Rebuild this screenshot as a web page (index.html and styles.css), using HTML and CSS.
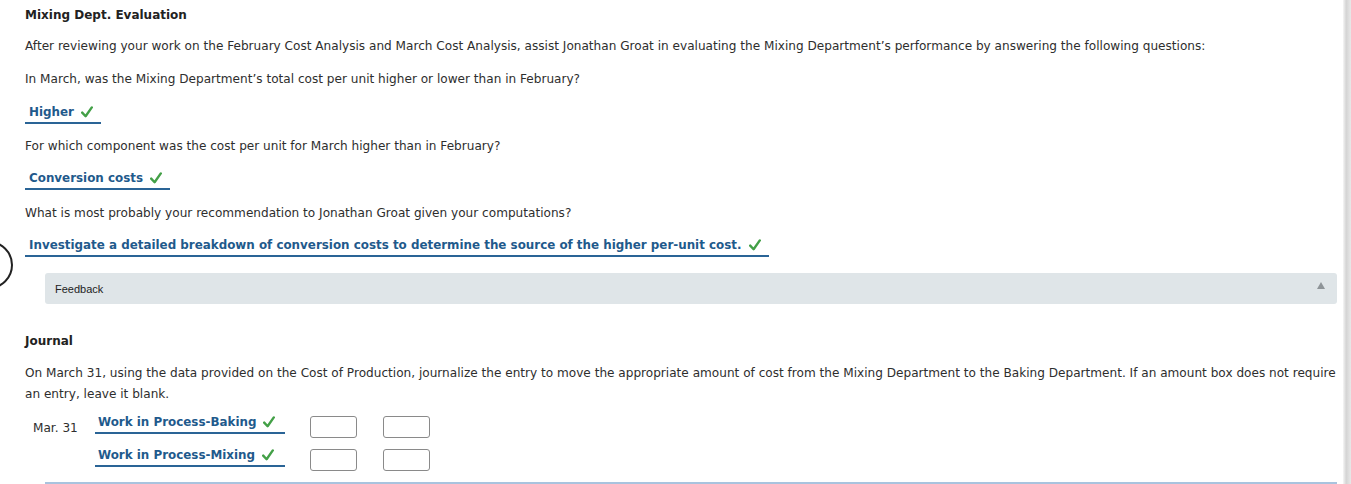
FILE: index.html
```html
<!DOCTYPE html>
<html>
<head>
<meta charset="utf-8">
<link rel="stylesheet" href="styles.css">
</head>
<body>
<div class="page">
  <main class="content">
    <h2 class="title">Mixing Dept. Evaluation</h2>
    <p class="para intro">After reviewing your work on the February Cost Analysis and March Cost Analysis, assist Jonathan Groat in evaluating the Mixing Department’s performance by answering the following questions:</p>
    <p class="para q q1">In March, was the Mixing Department’s total cost per unit higher or lower than in February?</p>
    <div class="answer a1"><span class="ans-text">Higher</span><svg class="check" viewBox="0 0 12 12" width="12" height="12"><path d="M1.2 6.6 L4.6 10.2 L10.8 1.4" fill="none" stroke="#43a047" stroke-width="2.4" stroke-linecap="round" stroke-linejoin="round"/></svg></div>
    <p class="para q q2">For which component was the cost per unit for March higher than in February?</p>
    <div class="answer a2"><span class="ans-text">Conversion costs</span><svg class="check" viewBox="0 0 12 12" width="12" height="12"><path d="M1.2 6.6 L4.6 10.2 L10.8 1.4" fill="none" stroke="#43a047" stroke-width="2.4" stroke-linecap="round" stroke-linejoin="round"/></svg></div>
    <p class="para q q3">What is most probably your recommendation to Jonathan Groat given your computations?</p>
    <div class="answer a3"><span class="ans-text">Investigate a detailed breakdown of conversion costs to determine the source of the higher per-unit cost.</span><svg class="check" viewBox="0 0 12 12" width="12" height="12"><path d="M1.2 6.6 L4.6 10.2 L10.8 1.4" fill="none" stroke="#43a047" stroke-width="2.4" stroke-linecap="round" stroke-linejoin="round"/></svg>
      <span class="ring"></span>
    </div>
    <div class="feedback">
      <span>Feedback</span>
      <span class="tri"></span>
    </div>
    <h2 class="title journal">Journal</h2>
    <p class="para jdesc">On March 31, using the data provided on the Cost of Production, journalize the entry to move the appropriate amount of cost from the Mixing Department to the Baking Department. If an amount box does not require an entry, leave it blank.</p>
    <div class="jtable">
      <div class="jrow">
        <span class="date">Mar. 31</span>
        <div class="acct-cell"><div class="answer acct"><span class="ans-text">Work in Process-Baking</span><svg class="check" viewBox="0 0 12 12" width="12" height="12"><path d="M1.2 6.6 L4.6 10.2 L10.8 1.4" fill="none" stroke="#43a047" stroke-width="2.4" stroke-linecap="round" stroke-linejoin="round"/></svg></div></div>
        <span class="box"></span>
        <span class="box"></span>
      </div>
      <div class="jrow">
        <span class="date"></span>
        <div class="acct-cell"><div class="answer acct"><span class="ans-text">Work in Process-Mixing</span><svg class="check" viewBox="0 0 12 12" width="12" height="12"><path d="M1.2 6.6 L4.6 10.2 L10.8 1.4" fill="none" stroke="#43a047" stroke-width="2.4" stroke-linecap="round" stroke-linejoin="round"/></svg></div></div>
        <span class="box"></span>
        <span class="box"></span>
      </div>
    </div>
    <div class="bottom-line"></div>
  </main>
  <div class="scrollbar"></div>
</div>
</body>
</html>
```

FILE: styles.css
```css
html, body {
  margin: 0;
  padding: 0;
  background: #ffffff;
}
body {
  font-family: "DejaVu Sans", Verdana, sans-serif;
  font-size: 12.1px;
  color: #2e2e2e;
  overflow: hidden;
}
.page {
  display: flex;
  width: 1351px;
  height: 484px;
  overflow: hidden;
}
.content {
  flex: 1;
  padding: 6px 6px 0 25px;
  position: relative;
}
.scrollbar {
  width: 8px;
  background: linear-gradient(to right, #f6f6f6, #d4d4d4 40%, #e8e8e8);
}
.title {
  margin: 0;
  font-size: 12px;
  font-weight: bold;
  color: #222;
  line-height: 18px;
}
.para {
  margin: 0;
  line-height: 21px;
}
.intro { margin-top: 12px; }
.q1 { margin-top: 12px; }
.q2 { margin-top: 12px; }
.q3 { margin-top: 13px; }
.answer {
  display: inline-flex;
  align-items: center;
  gap: 7px;
  padding: 0 8px 2px 4px;
  border-bottom: 2px solid #2a6496;
  line-height: 16px;
  position: relative;
  white-space: nowrap;
}
.ans-text {
  font-weight: bold;
  font-size: 11.9px;
  color: #1f5a8c;
}
.check {
  display: block;
  flex: none;
}
.a1 { margin-top: 14px; }
.a2 { margin-top: 13px; }
.a3 { margin-top: 13px; }
.ring {
  position: absolute;
  left: -60px;
  top: 4px;
  width: 48px;
  height: 48px;
  box-sizing: border-box;
  border: 2px solid #222;
  border-radius: 50%;
}
.feedback {
  margin: 16px 0 0 20px;
  height: 31px;
  background: #dfe5e8;
  border-radius: 3px;
  display: flex;
  align-items: center;
  justify-content: space-between;
  padding: 0 12px 0 10px;
  font-family: "Liberation Sans", Arial, sans-serif;
  font-size: 11px;
  color: #222;
}
.tri {
  width: 0;
  height: 0;
  border-left: 4px solid transparent;
  border-right: 4px solid transparent;
  border-bottom: 7px solid #8e9498;
  margin-top: -6px;
}
.journal { margin-top: 28px; }
.jdesc { margin-top: 13px; }
.jtable {
  margin-top: 9px;
  display: flex;
  flex-direction: column;
  gap: 9px;
}
.jrow {
  display: flex;
  align-items: flex-start;
}
.date {
  width: 70px;
  padding-left: 8px;
  padding-top: 6px;
  line-height: 16px;
  box-sizing: border-box;
}
.acct-cell {
  width: 190px;
  display: flex;
}
.acct {
  flex: 1;
  padding-left: 3px;
}
.box {
  width: 47px;
  height: 22px;
  box-sizing: border-box;
  border: 1px solid #8a8a8a;
  border-radius: 3px;
  margin-top: 2px;
}
.acct-cell + .box { margin-left: 25px; }
.box + .box { margin-left: 26px; }
.bottom-line {
  margin: 11px 0 0 20px;
  height: 2px;
  background: #a9c3de;
}
```
